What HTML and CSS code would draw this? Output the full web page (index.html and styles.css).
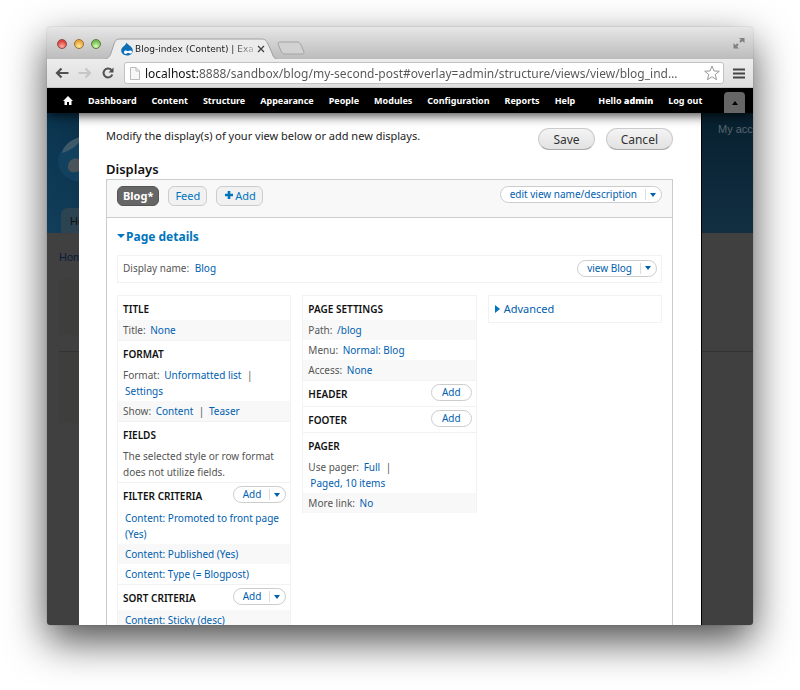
FILE: index.html
```html
<!DOCTYPE html>
<html lang="en">
  <head>
    <meta charset="UTF-8" />
    <meta name="viewport" content="width=device-width, initial-scale=1.0" />
    <title>Blog-index (Content)</title>
    <link rel="stylesheet" href="styles.css">
  </head>
  <body>
    <div class="window">
      <header class="tab-strip">
        <div class="lights">
          <button class="light red" aria-label="Close"></button>
          <button class="light yellow" aria-label="Minimize"></button>
          <button class="light green" aria-label="Zoom"></button>
        </div>
        <div class="tab">
          <svg class="tab-shape" viewBox="0 0 172 21" preserveAspectRatio="none">
            <path d="M0 21 C4 20 5 18 6 15 L9 6 C10 2 12 1 16 1 L156 1 C160 1 161 2 163 6 L167 15 C168 19 169 20 172 21" fill="#ececec" stroke="#a0a0a0" />
          </svg>
          <svg class="favicon" viewBox="0 0 12 14">
            <path d="M5.500 0.500 C6.500 3 11.800 4.500 11.800 8.500 C11.800 11.500 9 13.500 6 13.500 C3 13.500 0.200 11.500 0.200 8.300 C0.200 5 4.500 4 5.500 0.500 Z" fill="#0a6fb5" />
            <path d="M3 10.500 C3 8.300 5 8 7 9.300 C8.500 8 10.800 8 11 9.800 C11.200 12 9 12 7 10.800 C5.500 12.300 3.200 12.300 3 10.500 Z" fill="#fff" />
          </svg>
          <span class="tab-title">Blog-index (Content) | Exa</span>
          <button class="tab-close" aria-label="Close tab">
            <svg viewBox="0 0 8 8"><path d="M1 1 L7 7 M7 1 L1 7" stroke="#444" stroke-width="1.300" /></svg>
          </button>
        </div>
        <button class="new-tab" aria-label="New tab">
          <svg viewBox="0 0 28 14"><path d="M3 1 H20 C22 1 23 2 24 4 L27 11 C27 13 26 13 25 13 H8 C6 13 5 12 4 10 L1 3 C1 1 2 1 3 1 Z" fill="#d2d2d2" stroke="#a3a3a3" /></svg>
        </button>
        <button class="fullscreen" aria-label="Full screen">
          <svg viewBox="0 0 12 12"><path d="M6 1 H11.500 V6 Z M0.500 6 V11.500 H6 Z" fill="#808080" /><path d="M7 5 L10 2 M5 7 L2 10" stroke="#808080" stroke-width="2" /></svg>
        </button>
      </header>

      <div class="toolbar">
        <button class="nav-button" aria-label="Back">
          <svg viewBox="0 0 14 12"><path d="M13.500 6 H2 M6.500 1.500 L2 6 L6.500 10.500" fill="none" stroke="#505050" stroke-width="2.200" /></svg>
        </button>
        <button class="nav-button" aria-label="Forward">
          <svg viewBox="0 0 14 12"><path d="M0.500 6 H12 M7.500 1.500 L12 6 L7.500 10.500" fill="none" stroke="#c6c6c6" stroke-width="2.200" /></svg>
        </button>
        <button class="nav-button" aria-label="Reload">
          <svg viewBox="0 0 14 12"><path d="M10.500 3 A4.500 4.500 0 1 0 11.300 7.500" fill="none" stroke="#505050" stroke-width="2" /><path d="M12.500 0.500 V5.500 H7.500 Z" fill="#505050" /></svg>
        </button>
        <div class="address-bar">
          <svg class="page-icon" viewBox="0 0 10 13"><path d="M0.500 0.500 H6 L9.500 4 V12.500 H0.500 Z M6 0.500 V4 H9.500" fill="#f7f7f7" stroke="#bbb" /></svg>
          <input class="address" type="text" aria-label="Address" value="localhost:8888/sandbox/blog/my-second-post#overlay=admin/structure/views/view/blog_ind…" />
          <button class="star" aria-label="Bookmark this page">
            <svg viewBox="0 0 16 16"><path d="M8 1 L10 6 L15.300 6.200 L11.200 9.500 L12.600 14.700 L8 11.800 L3.400 14.700 L4.800 9.500 L0.700 6.200 L6 6 Z" fill="#fff" stroke="#999" /></svg>
          </button>
        </div>
        <button class="menu-button" aria-label="Menu">
          <svg viewBox="0 0 12 11"><path d="M0 1.500 H12 M0 5.500 H12 M0 9.500 H12" stroke="#444" stroke-width="2" /></svg>
        </button>
      </div>

      <nav class="admin-bar">
        <a class="home" href="#" aria-label="Home">
          <svg viewBox="0 0 10 9"><path d="M5 0 L10 5 H8.500 V9 H6 V6 H4 V9 H1.500 V5 H0 Z" fill="#fff" /></svg>
        </a>
        <a href="#">Dashboard</a>
        <a href="#">Content</a>
        <a href="#">Structure</a>
        <a href="#">Appearance</a>
        <a href="#">People</a>
        <a href="#">Modules</a>
        <a href="#">Configuration</a>
        <a href="#">Reports</a>
        <a href="#">Help</a>
        <a class="user" href="#">Hello <b>admin</b></a>
        <a href="#">Log out</a>
        <button class="drawer-toggle" aria-label="Hide shortcuts"><i class="arrow up"></i></button>
      </nav>

      <div class="viewport">
        <div class="site">
          <div class="site-header">
            <svg class="site-logo" viewBox="0 0 46 56">
              <path d="M38 0 C34 8 0 14 0 34 C0 47 12 55 25 55 C36 55 46 48 46 34 C46 16 40 10 38 0 Z" fill="#12405f" />
              <path d="M4 26 C6 17 14 12 25 9 C21 18 12 24 4 26 Z" fill="#3d5a6b" />
              <path d="M10 39 C11 31 19 29 25 35 C31 30 39 31 39 38 C39 46 32 45 25 41 C20 47 9 47 10 39 Z" fill="#4a5359" />
            </svg>
            <span class="account">My acc</span>
            <span class="site-tab">Home</span>
          </div>
          <div class="site-content">
            <span class="crumb">Home</span>
            <div class="site-block"></div>
            <div class="site-block tall"></div>
          </div>
        </div>

        <main class="overlay">
          <div class="intro">
            <p>Modify the display(s) of your view below or add new displays.</p>
            <div class="actions">
              <button>Save</button>
              <button>Cancel</button>
            </div>
          </div>
          <h1>Displays</h1>
          <div class="displays">
            <div class="display-tabs">
              <button class="display-tab active">Blog*</button>
              <button class="display-tab">Feed</button>
              <button class="display-tab"><svg class="plus" viewBox="0 0 8 8"><path d="M4 0 V8 M0 4 H8" stroke="#0074bd" stroke-width="2.600" /></svg>Add</button>
              <div class="dropbutton edit-view">
                <a href="#">edit view name/description</a>
                <button aria-label="More actions"><i class="arrow"></i></button>
              </div>
            </div>
            <div class="display-body">
              <h2><i class="arrow"></i><a href="#">Page details</a></h2>
              <div class="display-name">
                <span>Display name: <a href="#">Blog</a></span>
                <div class="dropbutton">
                  <a href="#">view Blog</a>
                  <button aria-label="More views"><i class="arrow"></i></button>
                </div>
              </div>

              <div class="columns">
                <div class="column">
                  <section>
                    <h3>Title</h3>
                    <p class="odd">Title: <a href="#">None</a></p>
                  </section>
                  <section>
                    <h3>Format</h3>
                    <p>Format: <a href="#">Unformatted list</a> |<br /><a href="#">Settings</a></p>
                    <p class="odd">Show: <a href="#">Content</a> | <a href="#">Teaser</a></p>
                  </section>
                  <section>
                    <h3>Fields</h3>
                    <p>The selected style or row format does not utilize fields.</p>
                  </section>
                  <section>
                    <div class="section-head">
                      <h3>Filter criteria</h3>
                      <div class="dropbutton">
                        <a href="#">Add</a>
                        <button aria-label="More filter actions"><i class="arrow"></i></button>
                      </div>
                    </div>
                    <p class="item"><a href="#">Content: Promoted to front page (Yes)</a></p>
                    <p class="item odd"><a href="#">Content: Published (Yes)</a></p>
                    <p class="item"><a href="#">Content: Type (= Blogpost)</a></p>
                  </section>
                  <section>
                    <div class="section-head">
                      <h3>Sort criteria</h3>
                      <div class="dropbutton">
                        <a href="#">Add</a>
                        <button aria-label="More sort actions"><i class="arrow"></i></button>
                      </div>
                    </div>
                    <p class="item odd"><a href="#">Content: Sticky (desc)</a></p>
                  </section>
                </div>

                <div class="column">
                  <section>
                    <h3>Page settings</h3>
                    <p class="odd">Path: <a href="#">/blog</a></p>
                    <p>Menu: <a href="#">Normal: Blog</a></p>
                    <p class="odd">Access: <a href="#">None</a></p>
                  </section>
                  <section>
                    <div class="section-head">
                      <h3>Header</h3>
                      <div class="dropbutton"><a href="#">Add</a></div>
                    </div>
                  </section>
                  <section>
                    <div class="section-head">
                      <h3>Footer</h3>
                      <div class="dropbutton"><a href="#">Add</a></div>
                    </div>
                  </section>
                  <section>
                    <h3>Pager</h3>
                    <p>Use pager: <a href="#">Full</a> |<br /><a href="#">Paged, 10 items</a></p>
                    <p class="odd">More link: <a href="#">No</a></p>
                  </section>
                </div>

                <div class="column">
                  <div class="advanced"><i class="arrow right"></i><a href="#">Advanced</a></div>
                </div>
              </div>
            </div>
          </div>
        </main>
      </div>
    </div>
  </body>
</html>
```
FILE: styles.css
```css
* {
  box-sizing: border-box;
}

body {
  height: 100vh;
  margin: 0;
  padding: 27px 47px 65px;
  background: #fff;
  color: #222;
  font-family: "Noto Sans", "Open Sans", sans-serif;
  font-size: 11px;
  overflow: hidden;
}

a {
  color: #0060b0;
  text-decoration: none;
}

button {
  padding: 0;
  border: 0;
  background: none;
  font-family: inherit;
  cursor: pointer;
}

svg {
  display: block;
}

h1,
h2,
h3,
p {
  margin: 0;
}

.window {
  display: flex;
  flex-direction: column;
  height: 100%;
  border-radius: 4px;
  box-shadow: 0 0 1px rgba(0, 0, 0, 0.5), 0 16px 40px rgba(0, 0, 0, 0.7);
}

/* browser chrome */
.tab-strip {
  display: flex;
  align-items: flex-end;
  height: 32px;
  padding: 0 8px 0 10px;
  border-radius: 4px 4px 0 0;
  background: linear-gradient(#e6e6e6, #bcbcbc);
}

.lights {
  display: flex;
  gap: 7px;
  padding-bottom: 10px;
}

.light {
  width: 10px;
  height: 10px;
  border: 1px solid #8a4a45;
  border-radius: 50%;
}

.red {
  background: radial-gradient(circle at 50% 80%, #ffb0a8, #e0403c 70%);
}

.yellow {
  border-color: #94703a;
  background: radial-gradient(circle at 50% 80%, #ffe9a0, #eda435 70%);
}

.green {
  border-color: #57803f;
  background: radial-gradient(circle at 50% 80%, #dcffb8, #74b951 70%);
}

.tab {
  position: relative;
  display: flex;
  align-items: center;
  width: 172px;
  height: 21px;
  margin-left: 4px;
  padding: 0 12px 0 16px;
}

.tab-shape {
  position: absolute;
  inset: 0;
  width: 100%;
  height: 100%;
}

.favicon {
  position: relative;
  width: 12px;
  height: 14px;
  margin-right: 2px;
}

.tab-title {
  position: relative;
  flex: 1;
  overflow: hidden;
  font-family: "DejaVu Sans", sans-serif;
  font-size: 9px;
  white-space: nowrap;
  mask-image: linear-gradient(to right, #000 80%, rgba(0, 0, 0, 0.2));
}

.tab-close {
  position: relative;
  width: 8px;
  height: 8px;
  margin-left: 2px;
}

.new-tab {
  width: 28px;
  height: 14px;
  margin-bottom: 4px;
}

.fullscreen {
  width: 12px;
  height: 12px;
  margin: 0 0 10px auto;
}

.toolbar {
  display: flex;
  align-items: center;
  gap: 9px;
  height: 29px;
  padding: 0 8px;
  border-bottom: 1px solid #c4c4c4;
  background: linear-gradient(#ececec, #dedede);
}

.nav-button {
  width: 14px;
  height: 12px;
}

.address-bar {
  display: flex;
  flex: 1;
  align-items: center;
  min-width: 0;
  height: 22px;
  padding: 0 3px 0 5px;
  border: 1px solid #c2c2c2;
  border-radius: 3px;
  background: #fff;
}

.page-icon {
  width: 10px;
  height: 13px;
  margin-right: 5px;
}

/* host name is darker than the rest of the url */
.address {
  flex: 1;
  min-width: 0;
  padding: 0;
  border: 0;
  outline: 0;
  background: linear-gradient(to right, #111 53px, #555 53px);
  background-clip: text;
  color: transparent;
  font-family: inherit;
  font-size: 12px;
}

.star {
  width: 16px;
  height: 16px;
  margin-left: 4px;
}

.menu-button {
  width: 12px;
  height: 11px;
}

/* admin menu */
.admin-bar {
  position: relative;
  z-index: 2;
  display: flex;
  align-items: center;
  gap: 15px;
  height: 25px;
  padding: 0 8px 0 16px;
  background: #000;
  box-shadow: 0 2px 12px rgba(0, 0, 0, 0.8);
  clip-path: inset(0 0 -20px 0);
  font-size: 9px;
  font-weight: 700;
  white-space: nowrap;
}

.admin-bar a {
  color: #fff;
}

.home svg {
  width: 10px;
  height: 9px;
}

.user {
  margin-left: 8px;
}

.drawer-toggle {
  display: flex;
  flex-shrink: 0;
  align-items: center;
  justify-content: center;
  width: 21px;
  height: 21px;
  margin: 4px 0 0 auto;
  border-radius: 4px 4px 0 0;
  background: #666;
}

.arrow {
  display: inline-block;
  border: 3px solid transparent;
  border-top: 4px solid #0060b0;
  border-bottom: 0;
}

.arrow.right {
  border: 4px solid transparent;
  border-left: 5px solid #0074bd;
  border-right: 0;
}

.arrow.up {
  border-top: 0;
  border-bottom: 4px solid #000;
}

/* dimmed site under the overlay */
.viewport {
  position: relative;
  flex: 1;
  min-height: 0;
  overflow: hidden;
  border-radius: 0 0 3px 3px;
  background: #404040;
}

.site-header {
  display: grid;
  grid-template-columns: 1fr auto;
  align-content: space-between;
  height: 120px;
  background: linear-gradient(to right, rgba(15, 85, 130, 0.4), transparent 20%),
    linear-gradient(#07202f, #122f42);
  font-family: "Liberation Sans", sans-serif;
}

.site-logo {
  width: 46px;
  height: 56px;
  margin: 14px 0 0 11px;
}

.account {
  width: 35px;
  margin-top: 10px;
  color: #58656e;
  white-space: nowrap;
}

.site-tab {
  width: 60px;
  height: 25px;
  margin-left: 14px;
  padding: 7px 9px;
  border-radius: 6px 6px 0 0;
  background: #2c4351;
  color: #111;
}

.site-content {
  padding: 18px 0 0 12px;
  font-family: "Liberation Sans", sans-serif;
}

.crumb {
  color: #0a1c38;
}

.site-block {
  height: 56px;
  margin-top: 16px;
  background: linear-gradient(to right, #3e3e3c 100px, transparent 100px);
}

.site-block.tall {
  height: 72px;
  border-top: 1px solid #333;
}

/* views overlay */
.overlay {
  position: absolute;
  inset: 0 52px 0 32px;
  padding: 15px 28px 0 27px;
  overflow: hidden;
  background: #fff;
  box-shadow: 1px 0 0 #000;
}

.intro {
  display: flex;
  justify-content: space-between;
  height: 32px;
}

.actions {
  display: flex;
  gap: 11px;
}

.actions button {
  height: 22px;
  padding: 0 14px;
  border: 1px solid #ccc;
  border-bottom-color: #aaa;
  border-radius: 11px;
  background: linear-gradient(#f4f4f4, #e2e2e2);
  color: #333;
  font-size: 12px;
}

h1 {
  height: 19px;
  color: #111;
  font-size: 13px;
  font-weight: 600;
  line-height: 19px;
}

.displays {
  border: 1px solid #ccc;
}

.display-tabs {
  display: flex;
  align-items: flex-start;
  gap: 9px;
  height: 38px;
  padding: 6px 10px;
  border-bottom: 1px solid #ccc;
  background: #f8f8f8;
}

.display-tab {
  display: flex;
  align-items: center;
  height: 20px;
  padding: 0 6px 2px;
  border: 1px solid #ccc;
  border-radius: 6px;
  background: #f1f1f1;
  color: #0074bd;
  font-size: 11px;
}

.display-tab.active {
  padding: 0 5px 2px;
  border-color: #555;
  background: #666;
  color: #fff;
  font-weight: 700;
}

.plus {
  width: 8px;
  height: 8px;
  margin: 0 2px;
}

.dropbutton {
  display: flex;
  align-items: center;
  height: 17px;
  border: 1px solid #ccc;
  border-radius: 9px;
  background: #fff;
  font-size: 10px;
}

.dropbutton a {
  padding: 0 10px 1px;
}

.dropbutton button {
  display: flex;
  align-items: center;
  height: 11px;
  padding: 0 5px 0 4px;
  border-left: 1px solid #ddd;
}

.dropbutton a:not(:last-child) {
  padding: 0 8px 1px 9px;
}

.edit-view {
  margin-left: auto;
}

.display-body {
  padding: 10px 10px 0;
}

h2 {
  display: flex;
  align-items: center;
  height: 18px;
  padding-bottom: 2px;
  font-size: 12px;
}

h2 .arrow {
  border-width: 4px 4px 0;
  border-top-color: #0074bd;
}

h2 a {
  margin-left: 1px;
  color: #0074bd;
}

.display-name {
  display: flex;
  align-items: center;
  justify-content: space-between;
  height: 28px;
  margin: 9px 0 12px;
  padding: 0 4px 2px 5px;
  border: 1px solid #f2f2f2;
  font-size: 10px;
}

.display-name span,
.column p {
  color: #555;
}

.display-name span a {
  margin-left: 3px;
}

.columns {
  display: grid;
  grid-template-columns: repeat(3, 1fr);
  align-items: start;
  gap: 11px;
}

.column section {
  border: 1px solid #f2f2f2;
  border-bottom: 0;
}

.column h3 {
  height: 24px;
  padding: 1px 5px 0;
  color: #111;
  font-size: 10px;
  font-weight: 600;
  line-height: 24px;
  text-transform: uppercase;
}

.column p {
  padding: 2px 5px;
  font-size: 10px;
  line-height: 16px;
}

.column p a {
  margin: 0 3px 0 2px;
}

.column .item a {
  display: inline-block;
  margin: 0 0 0 2px;
}

.column .odd {
  background: #f8f8f8;
}

.section-head {
  display: flex;
  justify-content: space-between;
  height: 25px;
}

.section-head .dropbutton {
  margin: 3px 4px 0 0;
}

.advanced {
  display: flex;
  align-items: center;
  gap: 4px;
  height: 28px;
  padding: 0 6px 1px;
  border: 1px solid #f2f2f2;
}
```
